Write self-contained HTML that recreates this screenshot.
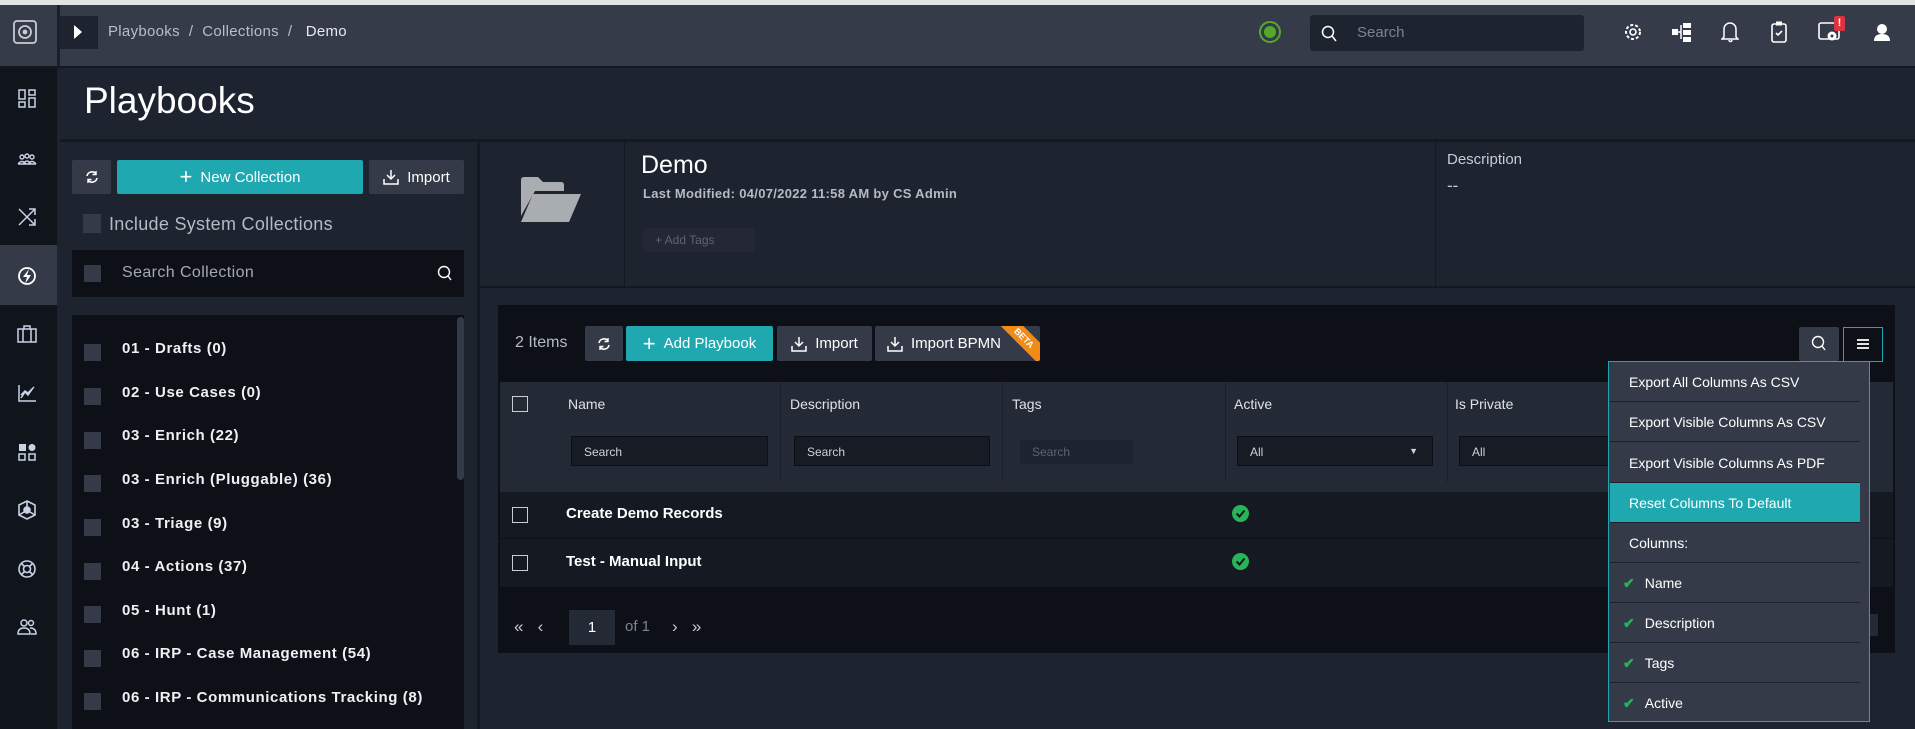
<!DOCTYPE html>
<html><head><meta charset="utf-8"><style>
*{box-sizing:border-box;margin:0;padding:0}
body{width:1915px;height:729px;overflow:hidden;background:#1e2330;font-family:"Liberation Sans",sans-serif;color:#fff;position:relative}
.a{position:absolute}
.btn{position:absolute;background:#343a47;border-radius:2px;color:#fff;font-size:15px;display:flex;align-items:center;justify-content:center;gap:8px}
.teal{background:#20a8b1}
.cb{position:absolute;width:17px;height:17px;background:#343a47}
.cbo{position:absolute;width:16px;height:16px;border:1.5px solid #c9ccd2}
.li{position:absolute;left:122px;font-size:15px;font-weight:bold;color:#eef0f3;letter-spacing:.6px}
.ico{position:absolute;left:16px;width:22px;height:22px}
.th{position:absolute;top:396px;font-size:14px;color:#dfe2e6}
.fi{position:absolute;top:436px;height:30px;background:#161b24;border:1px solid #0c1016;font-size:12px;color:#cfd3d8;padding:8px 12px}
.mi{position:absolute;left:1610px;width:250px;height:40px;font-size:14px;color:#fff;padding:12px 0 0 19px;border-bottom:1px solid #1c212b}
.ck{color:#27b55b;font-weight:bold;margin-right:10px;margin-left:-6px}
</style></head><body>
<div class="a" style="left:0;top:0;width:1915px;height:5px;background:#e3e3e3"></div>
<!-- header -->
<div class="a" style="left:0;top:5px;width:1915px;height:61px;background:#353b48"></div>
<div class="a" style="left:57px;top:5px;width:3px;height:61px;background:#1b1f27"></div>
<div class="a" style="left:0;top:66px;width:1915px;height:2px;background:#14181f"></div>
<svg class="a" style="left:13px;top:20px" width="24" height="24" viewBox="0 0 24 24"><rect x="1" y="1" width="22" height="22" rx="3" fill="none" stroke="#c8ccd2" stroke-width="1.8"/><circle cx="12" cy="12" r="6" fill="none" stroke="#c8ccd2" stroke-width="1.8"/><circle cx="12" cy="12" r="2.4" fill="#c8ccd2"/></svg>
<div class="a" style="left:60px;top:16px;width:38px;height:33px;background:#1e2330"></div>
<svg class="a" style="left:73px;top:24px" width="10" height="16"><path d="M1 1L9 8L1 15Z" fill="#fff"/></svg>
<div class="a" style="left:108px;top:23px;font-size:15px;color:#b9bec6;letter-spacing:.3px">Playbooks&nbsp; / &nbsp;Collections&nbsp; / &nbsp;&nbsp;<span style="color:#e8eaee">Demo</span></div>
<svg class="a" style="left:1258px;top:20px" width="24" height="24" viewBox="0 0 24 24"><circle cx="12" cy="12" r="10" fill="none" stroke="#55a82a" stroke-width="2"/><circle cx="12" cy="12" r="6" fill="#55a82a"/></svg>
<div class="a" style="left:1310px;top:15px;width:274px;height:36px;background:#1e2330;border-radius:3px"></div>
<svg class="a" style="left:1321px;top:25px" width="16" height="18"><circle cx="7" cy="7" r="5.5" fill="none" stroke="#fff" stroke-width="1.5"/><path d="M11 11L15 16" stroke="#fff" stroke-width="1.5"/></svg>
<div class="a" style="left:1357px;top:24px;font-size:15px;color:#7c8390">Search</div>
<svg class="a" style="left:1622px;top:21px" width="22" height="22" viewBox="0 0 22 22"><circle cx="11" cy="11" r="7" fill="none" stroke="#fff" stroke-width="2" stroke-dasharray="3 2"/><circle cx="11" cy="11" r="3" fill="none" stroke="#fff" stroke-width="1.6"/></svg>
<svg class="a" style="left:1672px;top:22px" width="20" height="20"><rect x="0" y="7" width="6" height="6" fill="#fff"/><rect x="11" y="1" width="8" height="5" fill="#fff"/><rect x="11" y="8" width="8" height="5" fill="#fff"/><rect x="11" y="15" width="8" height="5" fill="#fff"/><path d="M6 10H9M9 3V17" stroke="#fff" stroke-width="1.5"/></svg>
<svg class="a" style="left:1721px;top:20px" width="18" height="24"><path d="M3 17V9a6 6 0 0 1 12 0v8l2 2H1z M8 20a1.5 1.5 0 0 0 3 0" fill="none" stroke="#fff" stroke-width="1.5"/></svg>
<svg class="a" style="left:1771px;top:20px" width="16" height="24"><rect x="1" y="4" width="14" height="18" rx="2" fill="none" stroke="#fff" stroke-width="1.6"/><rect x="5" y="1.5" width="6" height="4" fill="#fff"/><path d="M5 13l2 2 4-4" stroke="#fff" stroke-width="1.6" fill="none"/></svg>
<svg class="a" style="left:1818px;top:22px" width="24" height="20"><rect x="1" y="1" width="20" height="16" rx="2" fill="none" stroke="#fff" stroke-width="1.6"/><circle cx="14" cy="14" r="4.5" fill="#fff"/><circle cx="14" cy="14" r="1.5" fill="#353b48"/></svg>
<div class="a" style="left:1834px;top:16px;width:11px;height:15px;background:#e0323c;border-radius:2px;font-size:11px;font-weight:bold;text-align:center;line-height:15px">!</div>
<svg class="a" style="left:1874px;top:23px" width="16" height="18"><circle cx="8" cy="6" r="5" fill="#fff"/><path d="M0 18Q0 11 8 11Q16 11 16 18Z" fill="#fff"/></svg>
<!-- sidebar -->
<div class="a" style="left:0;top:68px;width:57px;height:661px;background:#10141b"></div>
<div class="a" style="left:0;top:245px;width:57px;height:60px;background:#343a47"></div>
<svg class="ico" style="top:88px" viewBox="0 0 22 22"><g fill="none" stroke="#c8d2e6" stroke-width="1.5"><rect x="3" y="2" width="6" height="9"/><rect x="13" y="2" width="6" height="5"/><rect x="3" y="14" width="6" height="5"/><rect x="13" y="10" width="6" height="9"/></g></svg>
<svg class="ico" style="top:148px" viewBox="0 0 22 22"><g fill="none" stroke="#c8d2e6" stroke-width="1.4"><circle cx="6" cy="9" r="2"/><circle cx="11" cy="8" r="2"/><circle cx="16" cy="9" r="2"/><path d="M2 16q4-5 8 0M7 16q4-6 8 0M12 16q4-5 8 0M2 16h18"/></g></svg>
<svg class="ico" style="top:206px" viewBox="0 0 22 22"><g fill="none" stroke="#c8d2e6" stroke-width="1.5"><path d="M3 3l16 16M3 19L19 3M13 3h6v6M13 19h6v-6"/></g></svg>
<svg class="ico" style="top:265px" viewBox="0 0 22 22"><circle cx="11" cy="11" r="8" fill="none" stroke="#fff" stroke-width="1.8"/><path d="M13 4L7 12h4l-2 7 6-9h-4z" fill="#fff"/></svg>
<svg class="ico" style="top:323px" viewBox="0 0 22 22"><g fill="none" stroke="#c8d2e6" stroke-width="1.5"><rect x="2" y="6" width="18" height="13"/><path d="M8 6V3h6v3M7 6v13M15 6v13"/></g></svg>
<svg class="ico" style="top:382px" viewBox="0 0 22 22"><g fill="none" stroke="#c8d2e6" stroke-width="1.5"><path d="M3 3v16h17M5 16l4-6 3 3 5-7M5 13l4-4 3 2 6-6"/></g></svg>
<svg class="ico" style="top:441px" viewBox="0 0 22 22"><g fill="#c8d2e6"><rect x="3" y="3" width="7" height="7"/><circle cx="16" cy="6.5" r="3.5"/></g><g fill="none" stroke="#c8d2e6" stroke-width="1.5"><rect x="3" y="13" width="6" height="6"/><rect x="13" y="13" width="6" height="6"/></g></svg>
<svg class="ico" style="top:499px" viewBox="0 0 22 22"><g fill="none" stroke="#c8d2e6" stroke-width="1.6"><path d="M11 2l8 4v10l-8 4-8-4V6z"/><circle cx="11" cy="11" r="3" fill="#c8d2e6"/><path d="M11 8V2M8 13l-5 3M14 13l5 3"/></g></svg>
<svg class="ico" style="top:558px" viewBox="0 0 22 22"><g fill="none" stroke="#c8d2e6" stroke-width="1.6"><circle cx="11" cy="11" r="8"/><circle cx="11" cy="11" r="3.5"/><path d="M5 5l4 4M17 5l-4 4M5 17l4-4M17 17l-4-4"/></g></svg>
<svg class="ico" style="top:616px" viewBox="0 0 22 22"><g fill="none" stroke="#c8d2e6" stroke-width="1.5"><circle cx="8" cy="7" r="3"/><circle cx="15" cy="7" r="2.5"/><path d="M2 18q0-6 6-6t6 6zM14 12q6 0 6 6h-5"/></g></svg>
<!-- title -->
<div class="a" style="left:84px;top:80px;font-size:37px;color:#fff">Playbooks</div>
<div class="a" style="left:60px;top:139px;width:1855px;height:3px;background:#14181f"></div>
<!-- left panel -->
<div class="a" style="left:477px;top:142px;width:3px;height:587px;background:#14181f"></div>
<div class="btn" style="left:72px;top:160px;width:39px;height:34px"><svg width="14" height="14" viewBox="0 0 14 14"><path d="M2 6a5 5 0 0 1 9-2M12 8a5 5 0 0 1-9 2" fill="none" stroke="#fff" stroke-width="1.6"/><path d="M11 1v3.5H7.5M3 13V9.5h3.5" fill="none" stroke="#fff" stroke-width="1.4"/></svg></div>
<div class="btn teal" style="left:117px;top:160px;width:246px;height:34px"><span style="font-size:22px;font-weight:300">+</span>New Collection</div>
<div class="btn" style="left:369px;top:160px;width:95px;height:34px"><svg width="16" height="16"><path d="M8 1v9M4 6l4 4 4-4M1 10v5h14v-5" fill="none" stroke="#fff" stroke-width="1.5"/></svg>Import</div>
<div class="cb" style="left:83px;top:214px;width:18px;height:19px"></div>
<div class="a" style="left:109px;top:214px;font-size:18px;color:#b5bac3;letter-spacing:.3px">Include System Collections</div>
<div class="a" style="left:72px;top:250px;width:392px;height:47px;background:#0d1117"></div>
<div class="cb" style="left:84px;top:265px"></div>
<div class="a" style="left:122px;top:264px;font-size:16px;color:#a3a9b3;letter-spacing:.4px">Search Collection</div>
<svg class="a" style="left:437px;top:265px" width="16" height="18"><circle cx="7" cy="7" r="5.5" fill="none" stroke="#fff" stroke-width="1.4"/><path d="M11 11L14 15" stroke="#fff" stroke-width="1.4"/></svg>
<div class="a" style="left:72px;top:315px;width:392px;height:414px;background:#0d1117"></div>
<div class="a" style="left:457px;top:317px;width:7px;height:163px;background:#343a47;border-radius:4px"></div>
<div class="cb" style="left:84px;top:344px"></div><div class="li" style="top:340px">01 - Drafts (0)</div>
<div class="cb" style="left:84px;top:388px"></div><div class="li" style="top:384px">02 - Use Cases (0)</div>
<div class="cb" style="left:84px;top:432px"></div><div class="li" style="top:427px">03 - Enrich (22)</div>
<div class="cb" style="left:84px;top:475px"></div><div class="li" style="top:471px">03 - Enrich (Pluggable) (36)</div>
<div class="cb" style="left:84px;top:519px"></div><div class="li" style="top:515px">03 - Triage (9)</div>
<div class="cb" style="left:84px;top:563px"></div><div class="li" style="top:558px">04 - Actions (37)</div>
<div class="cb" style="left:84px;top:606px"></div><div class="li" style="top:602px">05 - Hunt (1)</div>
<div class="cb" style="left:84px;top:650px"></div><div class="li" style="top:645px">06 - IRP - Case Management (54)</div>
<div class="cb" style="left:84px;top:693px"></div><div class="li" style="top:689px">06 - IRP - Communications Tracking (8)</div>
<!-- detail header -->
<div class="a" style="left:624px;top:142px;width:1px;height:144px;background:#14181f"></div>
<div class="a" style="left:1435px;top:142px;width:1px;height:144px;background:#14181f"></div>
<div class="a" style="left:480px;top:286px;width:1435px;height:2px;background:#14181f"></div>
<svg class="a" style="left:519px;top:176px" width="64" height="48" viewBox="0 0 64 48"><path d="M2 4q0-3 3-3h14l5 5h18q3 0 3 3v6H16L2 40z" fill="#a9acb1"/><path d="M14 18h48L50 46H2z" fill="#a9acb1"/></svg>
<div class="a" style="left:641px;top:151px;font-size:25px;color:#fff">Demo</div>
<div class="a" style="left:643px;top:186px;font-size:13px;font-weight:bold;color:#b6bac2;letter-spacing:.3px">Last Modified: 04/07/2022 11:58 AM by CS Admin</div>
<div class="a" style="left:643px;top:228px;width:112px;height:24px;background:#232834;border-radius:2px;font-size:12px;color:#5e6470;padding:5px 12px">+ Add Tags</div>
<div class="a" style="left:1447px;top:151px;font-size:15px;color:#c8ccd2">Description</div>
<div class="a" style="left:1447px;top:176px;font-size:17px;color:#c8ccd2">--</div>
<!-- grid panel -->
<div class="a" style="left:498px;top:305px;width:1397px;height:348px;background:#0d1117"></div>
<div class="a" style="left:515px;top:334px;font-size:16px;color:#b5bac3">2 Items</div>
<div class="btn" style="left:585px;top:326px;width:38px;height:35px"><svg width="14" height="14" viewBox="0 0 14 14"><path d="M2 6a5 5 0 0 1 9-2M12 8a5 5 0 0 1-9 2" fill="none" stroke="#fff" stroke-width="1.6"/><path d="M11 1v3.5H7.5M3 13V9.5h3.5" fill="none" stroke="#fff" stroke-width="1.4"/></svg></div>
<div class="btn teal" style="left:626px;top:326px;width:147px;height:35px"><span style="font-size:22px;font-weight:300">+</span>Add Playbook</div>
<div class="btn" style="left:777px;top:326px;width:95px;height:35px"><svg width="16" height="16"><path d="M8 1v9M4 6l4 4 4-4M1 10v5h14v-5" fill="none" stroke="#fff" stroke-width="1.5"/></svg>Import</div>
<div class="btn" style="left:875px;top:326px;width:165px;height:35px;overflow:hidden;justify-content:flex-start;padding-left:12px"><svg width="16" height="16"><path d="M8 1v9M4 6l4 4 4-4M1 10v5h14v-5" fill="none" stroke="#fff" stroke-width="1.5"/></svg>Import BPMN
<div class="a" style="right:-24px;top:4px;width:80px;height:16px;background:#f28a16;transform:rotate(45deg);font-size:9px;font-weight:bold;text-align:center;line-height:16px;transform-origin:center">BETA</div></div>
<div class="btn" style="left:1799px;top:327px;width:40px;height:34px"><svg width="16" height="18"><circle cx="7" cy="7" r="5.5" fill="none" stroke="#fff" stroke-width="1.4"/><path d="M11 11L14 15" stroke="#fff" stroke-width="1.4"/></svg></div>
<div class="a" style="left:1843px;top:327px;width:40px;height:35px;border:1.5px solid #20a8b1;background:#0d1117"></div>
<svg class="a" style="left:1857px;top:339px" width="12" height="10"><path d="M0 1h12M0 5h12M0 9h12" stroke="#fff" stroke-width="1.8"/></svg>
<div class="a" style="left:500px;top:382px;width:1393px;height:110px;background:#232a36"></div>
<div class="a" style="left:780px;top:382px;width:1px;height:100px;background:#1a1f29"></div>
<div class="a" style="left:1002px;top:382px;width:1px;height:100px;background:#1a1f29"></div>
<div class="a" style="left:1225px;top:382px;width:1px;height:100px;background:#1a1f29"></div>
<div class="a" style="left:1447px;top:382px;width:1px;height:100px;background:#1a1f29"></div>
<div class="cbo" style="left:512px;top:396px"></div>
<div class="th" style="left:568px">Name</div><div class="th" style="left:790px">Description</div><div class="th" style="left:1012px">Tags</div><div class="th" style="left:1234px">Active</div><div class="th" style="left:1455px">Is Private</div>
<div class="fi" style="left:571px;width:197px">Search</div>
<div class="fi" style="left:794px;width:196px">Search</div>
<div class="fi" style="left:1020px;top:440px;width:113px;height:24px;padding:5px 12px;color:#5e6470;background:#1e2330;border:none">Search</div>
<div class="fi" style="left:1237px;width:196px">All<span style="position:absolute;right:14px;top:9px;font-size:9px">▼</span></div>
<div class="fi" style="left:1459px;width:160px">All</div>
<div class="a" style="left:500px;top:492px;width:1393px;height:46px;background:#141922"></div>
<div class="a" style="left:500px;top:539px;width:1393px;height:48px;background:#141922"></div>
<div class="cbo" style="left:512px;top:507px"></div><div class="a" style="left:566px;top:505px;font-size:15px;font-weight:bold">Create Demo Records</div>
<div class="cbo" style="left:512px;top:555px"></div><div class="a" style="left:566px;top:553px;font-size:15px;font-weight:bold">Test - Manual Input</div>
<svg class="a" style="left:1232px;top:505px" width="17" height="17"><circle cx="8.5" cy="8.5" r="8.5" fill="#27b55b"/><path d="M4.5 8.5l3 3 5-6" stroke="#10141b" stroke-width="2" fill="none"/></svg>
<svg class="a" style="left:1232px;top:553px" width="17" height="17"><circle cx="8.5" cy="8.5" r="8.5" fill="#27b55b"/><path d="M4.5 8.5l3 3 5-6" stroke="#10141b" stroke-width="2" fill="none"/></svg>
<div class="a" style="left:514px;top:617px;font-size:17px;color:#c8ccd2">«&nbsp;&nbsp; ‹</div>
<div class="a" style="left:569px;top:610px;width:46px;height:35px;background:#232a36;font-size:15px;text-align:center;line-height:35px">1</div>
<div class="a" style="left:625px;top:618px;font-size:15px;color:#7c8390">of 1</div>
<div class="a" style="left:672px;top:617px;font-size:17px;color:#c8ccd2">›&nbsp;&nbsp; »</div>
<div class="a" style="left:1860px;top:614px;width:18px;height:22px;background:#232a36"></div>
<!-- dropdown -->
<div class="a" style="left:1608px;top:361px;width:262px;height:361px;background:#343a47;border:1.5px solid #20a8b1"></div>
<div class="mi" style="top:362px">Export All Columns As CSV</div>
<div class="mi" style="top:402px">Export Visible Columns As CSV</div>
<div class="mi" style="top:443px">Export Visible Columns As PDF</div>
<div class="mi" style="top:483px;background:#20a8b1">Reset Columns To Default</div>
<div class="mi" style="top:523px">Columns:</div>
<div class="mi" style="top:563px"><span class="ck">✔</span>Name</div>
<div class="mi" style="top:603px"><span class="ck">✔</span>Description</div>
<div class="mi" style="top:643px"><span class="ck">✔</span>Tags</div>
<div class="mi" style="top:683px;border:none"><span class="ck">✔</span>Active</div>
</body></html>
